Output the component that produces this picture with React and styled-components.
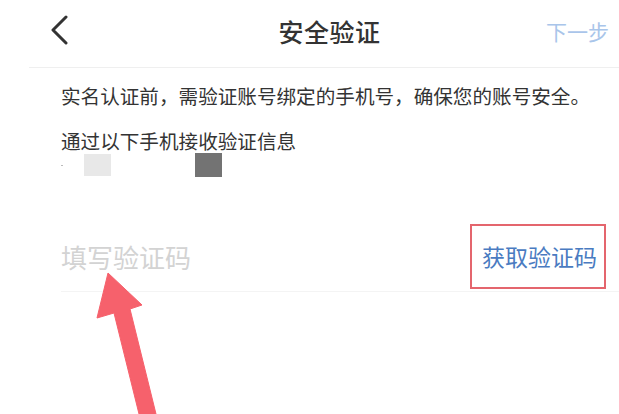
import React from 'react';
import styled, { createGlobalStyle } from 'styled-components';

const GlobalStyle = createGlobalStyle`
  html, body {
    margin: 0;
    padding: 0;
    background: #fff;
  }
  body {
    font-family: "Noto Sans CJK SC", "Noto Sans", sans-serif;
    color: #333;
  }
`;

const Page = styled.div`
  position: relative;
  width: 619px;
  height: 414px;
  overflow: hidden;
  background: #fff;
`;

const Header = styled.div`
  display: grid;
  grid-template-columns: 1fr auto 1fr;
  align-items: center;
  height: 62px;
  margin-bottom: 5px;
  padding: 0 10px 0 50px;
`;

const BackButton = styled.button`
  justify-self: start;
  display: flex;
  align-items: center;
  padding: 0;
  margin-top: -2px;
  border: 0;
  background: none;
  color: #333;
`;

const Title = styled.h1`
  margin: 0;
  font-size: 25px;
  font-weight: 500;
  letter-spacing: 0.5px;
  color: #333;
`;

const NextLink = styled.span`
  justify-self: end;
  font-size: 21px;
  color: #a9c5ea;
`;

const Divider = styled.div`
  height: 1px;
  margin-left: 29px;
  background: #efefef;
`;

const Content = styled.div`
  padding: 16px 0 0 61px;
`;

const Notice = styled.p`
  margin: 0;
  font-size: 19.6px;
  line-height: 24px;
  color: #333;
  white-space: nowrap;
`;

const Label = styled(Notice)`
  margin-top: 21px;
`;

const PhoneRow = styled.div`
  display: flex;
  align-items: center;
  height: 24px;
`;

const Dash = styled.span`
  width: 2px;
  height: 1px;
  margin-right: 21px;
  background: #bbb;
`;

const Mask = styled.span`
  width: 27px;
  height: ${(p) => (p.dark ? 24 : 22)}px;
  margin-left: ${(p) => p.gap || 0}px;
  background: ${(p) => (p.dark ? '#737373' : '#e8e8e8')};
`;

const CodeRow = styled.div`
  display: flex;
  align-items: center;
  justify-content: space-between;
  height: 70px;
  margin: 44px 0 0 61px;
  padding-right: 13px;
  border-bottom: 1px solid #f4f4f4;
`;

const CodeInput = styled.input`
  flex: 1;
  min-width: 0;
  border: 0;
  outline: none;
  padding: 0;
  font-family: inherit;
  font-size: 26px;
  color: #333;
  background: transparent;
  &::placeholder {
    color: #d3d3d3;
  }
`;

const SendButton = styled.button`
  padding: 19px 7px 19px 10px;
  border: 2px solid #e4656d;
  background: #fff;
  font-family: inherit;
  font-size: 23px;
  line-height: 23px;
  color: #4a7bc1;
`;

const ArrowLayer = styled.svg`
  position: absolute;
  left: 0;
  top: 0;
  width: 619px;
  height: 414px;
  pointer-events: none;
`;

export default function App() {
  return (
    <Page>
      <GlobalStyle />
      <Header>
        <BackButton aria-label="返回">
          <svg width="20" height="30" viewBox="0 0 20 30">
            <path
              d="M16 2 L3 15 L16 28"
              fill="none"
              stroke="#333"
              strokeWidth="3"
              strokeLinecap="round"
              strokeLinejoin="round"
            />
          </svg>
        </BackButton>
        <Title>安全验证</Title>
        <NextLink>下一步</NextLink>
      </Header>
      <Divider />
      <Content>
        <Notice>实名认证前，需验证账号绑定的手机号，确保您的账号安全。</Notice>
        <Label>通过以下手机接收验证信息</Label>
        <PhoneRow>
          <Dash />
          <Mask />
          <Mask dark gap={84} />
        </PhoneRow>
      </Content>
      <CodeRow>
        <CodeInput placeholder="填写验证码" />
        <SendButton>获取验证码</SendButton>
      </CodeRow>
      <ArrowLayer viewBox="0 0 619 414">
        <polygon
          points="108,273 142,305 130,309 157,418 140,418 114,313 97,318"
          fill="#f6616c"
          strokeLinejoin="round"
          stroke="#f6616c"
          strokeWidth="1"
        />
      </ArrowLayer>
    </Page>
  );
}
